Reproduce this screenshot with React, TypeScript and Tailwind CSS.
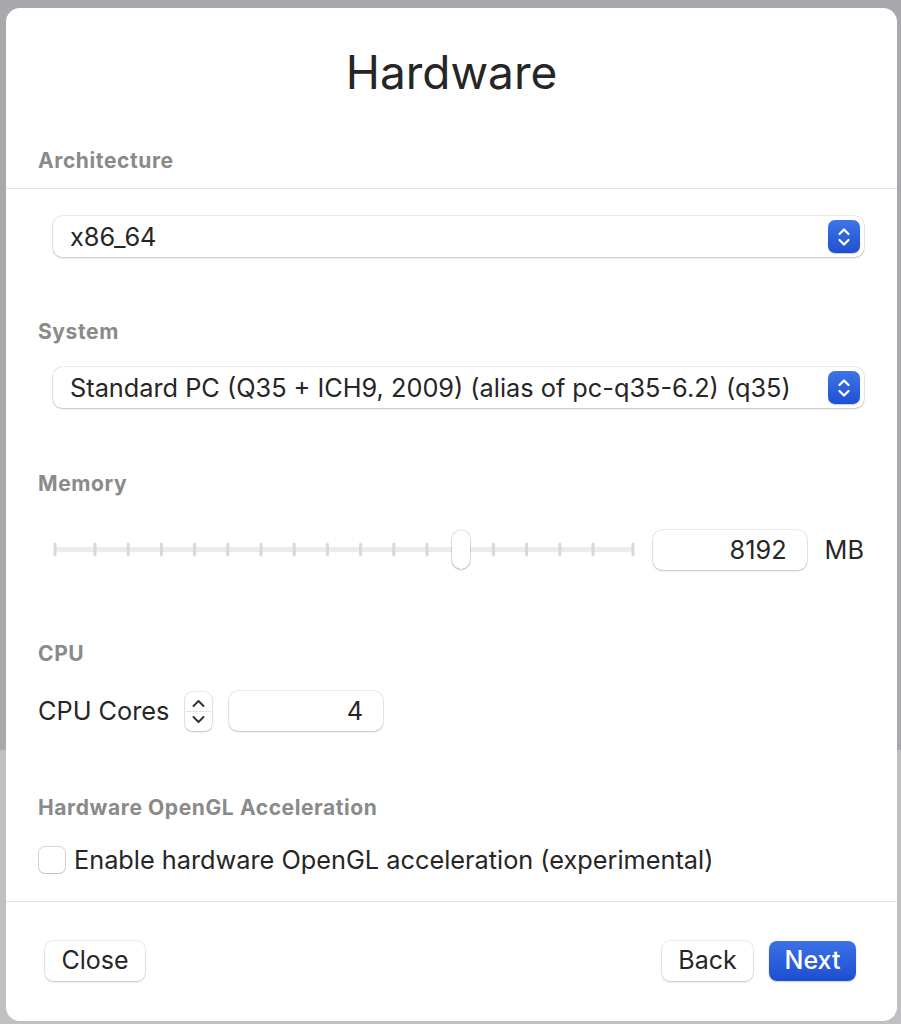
import React from "react";

const ticks = [2, ...Array.from({ length: 16 }, (_, i) => 42 + i * 33.2), 580];

function BlueStepper() {
  return (
    <div className="flex h-[33px] w-[32px] items-center justify-center rounded-[7px] bg-[linear-gradient(to_bottom,#3f74e6,#1f50d2)] shadow-[0_1px_1px_rgba(0,0,0,0.2)]">
      <svg width="14" height="22" viewBox="0 0 14 22" fill="none" stroke="white" strokeWidth="2.2" strokeLinecap="round" strokeLinejoin="round">
        <path d="M2.5 8 L7 3.5 L11.5 8" />
        <path d="M2.5 14 L7 18.5 L11.5 14" />
      </svg>
    </div>
  );
}

function Select({ value }: { value: string }) {
  return (
    <div className="flex h-[41px] items-center justify-between rounded-[9px] bg-white pl-[17px] pr-[4px] shadow-[0_0_0_0.5px_rgba(0,0,0,0.14),0_1px_2px_rgba(0,0,0,0.18)]">
      <span className="text-[25.3px] text-[#262626]">{value}</span>
      <BlueStepper />
    </div>
  );
}

function Label({ children }: { children: React.ReactNode }) {
  return (
    <div className="flex h-[24px] items-center px-[32px] text-[21px] font-bold tracking-[0.6px] text-[#8a8a8a]">
      {children}
    </div>
  );
}

function Field({ value, width }: { value: string; width: string }) {
  return (
    <div className={`flex h-[40px] items-center justify-end rounded-[9px] bg-white pr-[20px] text-[25.3px] text-[#262626] shadow-[0_0_0_0.5px_rgba(0,0,0,0.14),0_1px_2px_rgba(0,0,0,0.18)] ${width}`}>
      {value}
    </div>
  );
}

function Button({ children, primary }: { children: React.ReactNode; primary?: boolean }) {
  return (
    <button
      className={
        primary
          ? "flex h-[40px] w-[87px] items-center justify-center rounded-[8px] bg-[linear-gradient(to_bottom,#3c71e6,#1d4ed1)] text-[25px] font-medium text-white shadow-[0_1px_2px_rgba(0,0,0,0.2)]"
          : "flex h-[40px] w-full items-center justify-center rounded-[8px] bg-white text-[25px] text-[#262626] shadow-[0_0_0_0.5px_rgba(0,0,0,0.14),0_1px_2px_rgba(0,0,0,0.18)]"
      }
    >
      {children}
    </button>
  );
}

export default function App() {
  return (
    <div
      className="min-h-[1024px] w-[901px] overflow-hidden bg-[linear-gradient(to_bottom,#a9a9ad_0,#a9a9ad_750px,#c0c0c2_750px)] pl-[6px] pt-[8px]"
      style={{ fontFamily: "Inter, 'Liberation Sans', sans-serif" }}
    >
      <div className="flex h-[1013px] w-[891px] flex-col rounded-[14px] bg-white">
        <div className="flex h-[64px] mt-[32px] items-center justify-center text-[46px] text-[#262626]">
          Hardware
        </div>
        <div className="mt-[45px]">
          <Label>Architecture</Label>
        </div>
        <div className="mt-[15px] h-px bg-[#e3e3e3]" />

        <div className="mt-[27px] pl-[47px] pr-[33px]">
          <Select value="x86_64" />
        </div>

        <div className="mt-[63px]">
          <Label>System</Label>
        </div>
        <div className="mt-[23px] pl-[47px] pr-[33px]">
          <Select value="Standard PC (Q35 + ICH9, 2009) (alias of pc-q35-6.2) (q35)" />
        </div>

        <div className="mt-[64px]">
          <Label>Memory</Label>
        </div>
        <div className="mt-[34px] flex h-[40px] items-center pl-[47px] pr-[33px]">
          <div className="relative h-[40px] w-[582px]">
            <svg className="absolute left-0 top-0" width="582" height="40" viewBox="0 0 582 40">
              <rect x="1" y="17" width="580" height="5" rx="2.5" fill="#ececec" />
              {ticks.map((x, i) => (
                <rect key={i} x={x - 1.5} y="12.5" width="3" height="14" rx="1.5" fill="#d9d9d9" />
              ))}
            </svg>
            <div className="absolute left-[399px] top-0 h-[39px] w-[18px] rounded-full bg-white shadow-[0_0_0_0.5px_rgba(0,0,0,0.2),0_1px_2px_rgba(0,0,0,0.2)]" />
          </div>
          <div className="ml-[20px]">
            <Field value="8192" width="w-[154px]" />
          </div>
          <span className="ml-[18px] text-[25.3px] text-[#262626]">MB</span>
        </div>

        <div className="mt-[72px]">
          <Label>CPU</Label>
        </div>
        <div className="mt-[25px] flex h-[40px] items-center pl-[32px]">
          <span className="w-[147px] text-[25.3px] text-[#262626]">CPU Cores</span>
          <div className="flex h-[39px] w-[27px] flex-col items-center justify-center rounded-[7px] bg-white shadow-[0_0_0_0.5px_rgba(0,0,0,0.16),0_1px_2px_rgba(0,0,0,0.18)]">
            <svg width="27" height="39" viewBox="0 0 27 39" fill="none" stroke="#333" strokeWidth="2" strokeLinecap="round" strokeLinejoin="round">
              <path d="M8.5 14 L13.5 9 L18.5 14" />
              <line x1="1" y1="19.5" x2="26" y2="19.5" stroke="#e4e4e4" strokeWidth="1" />
              <path d="M8.5 25 L13.5 30 L18.5 25" />
            </svg>
          </div>
          <div className="ml-[17px]">
            <Field value="4" width="w-[154px]" />
          </div>
        </div>

        <div className="mt-[65px]">
          <Label>Hardware OpenGL Acceleration</Label>
        </div>
        <div className="mt-[26px] flex h-[28px] items-center pl-[33px]">
          <div className="h-[26px] w-[26px] rounded-[6px] bg-white shadow-[0_0_0_1px_rgba(0,0,0,0.16),0_1px_1px_rgba(0,0,0,0.1)]" />
          <span className="ml-[9px] text-[25.3px] text-[#262626]">
            Enable hardware OpenGL acceleration (experimental)
          </span>
        </div>

        <div className="mt-[27px] h-px bg-[#e3e3e3]" />

        <div className="mt-[39px] flex items-center pl-[39px] pr-[41px]">
          <div className="w-[100px]">
            <Button>Close</Button>
          </div>
          <div className="flex-1" />
          <div className="w-[91px]">
            <Button>Back</Button>
          </div>
          <div className="ml-[16px]">
            <Button primary>Next</Button>
          </div>
        </div>
      </div>
    </div>
  );
}
